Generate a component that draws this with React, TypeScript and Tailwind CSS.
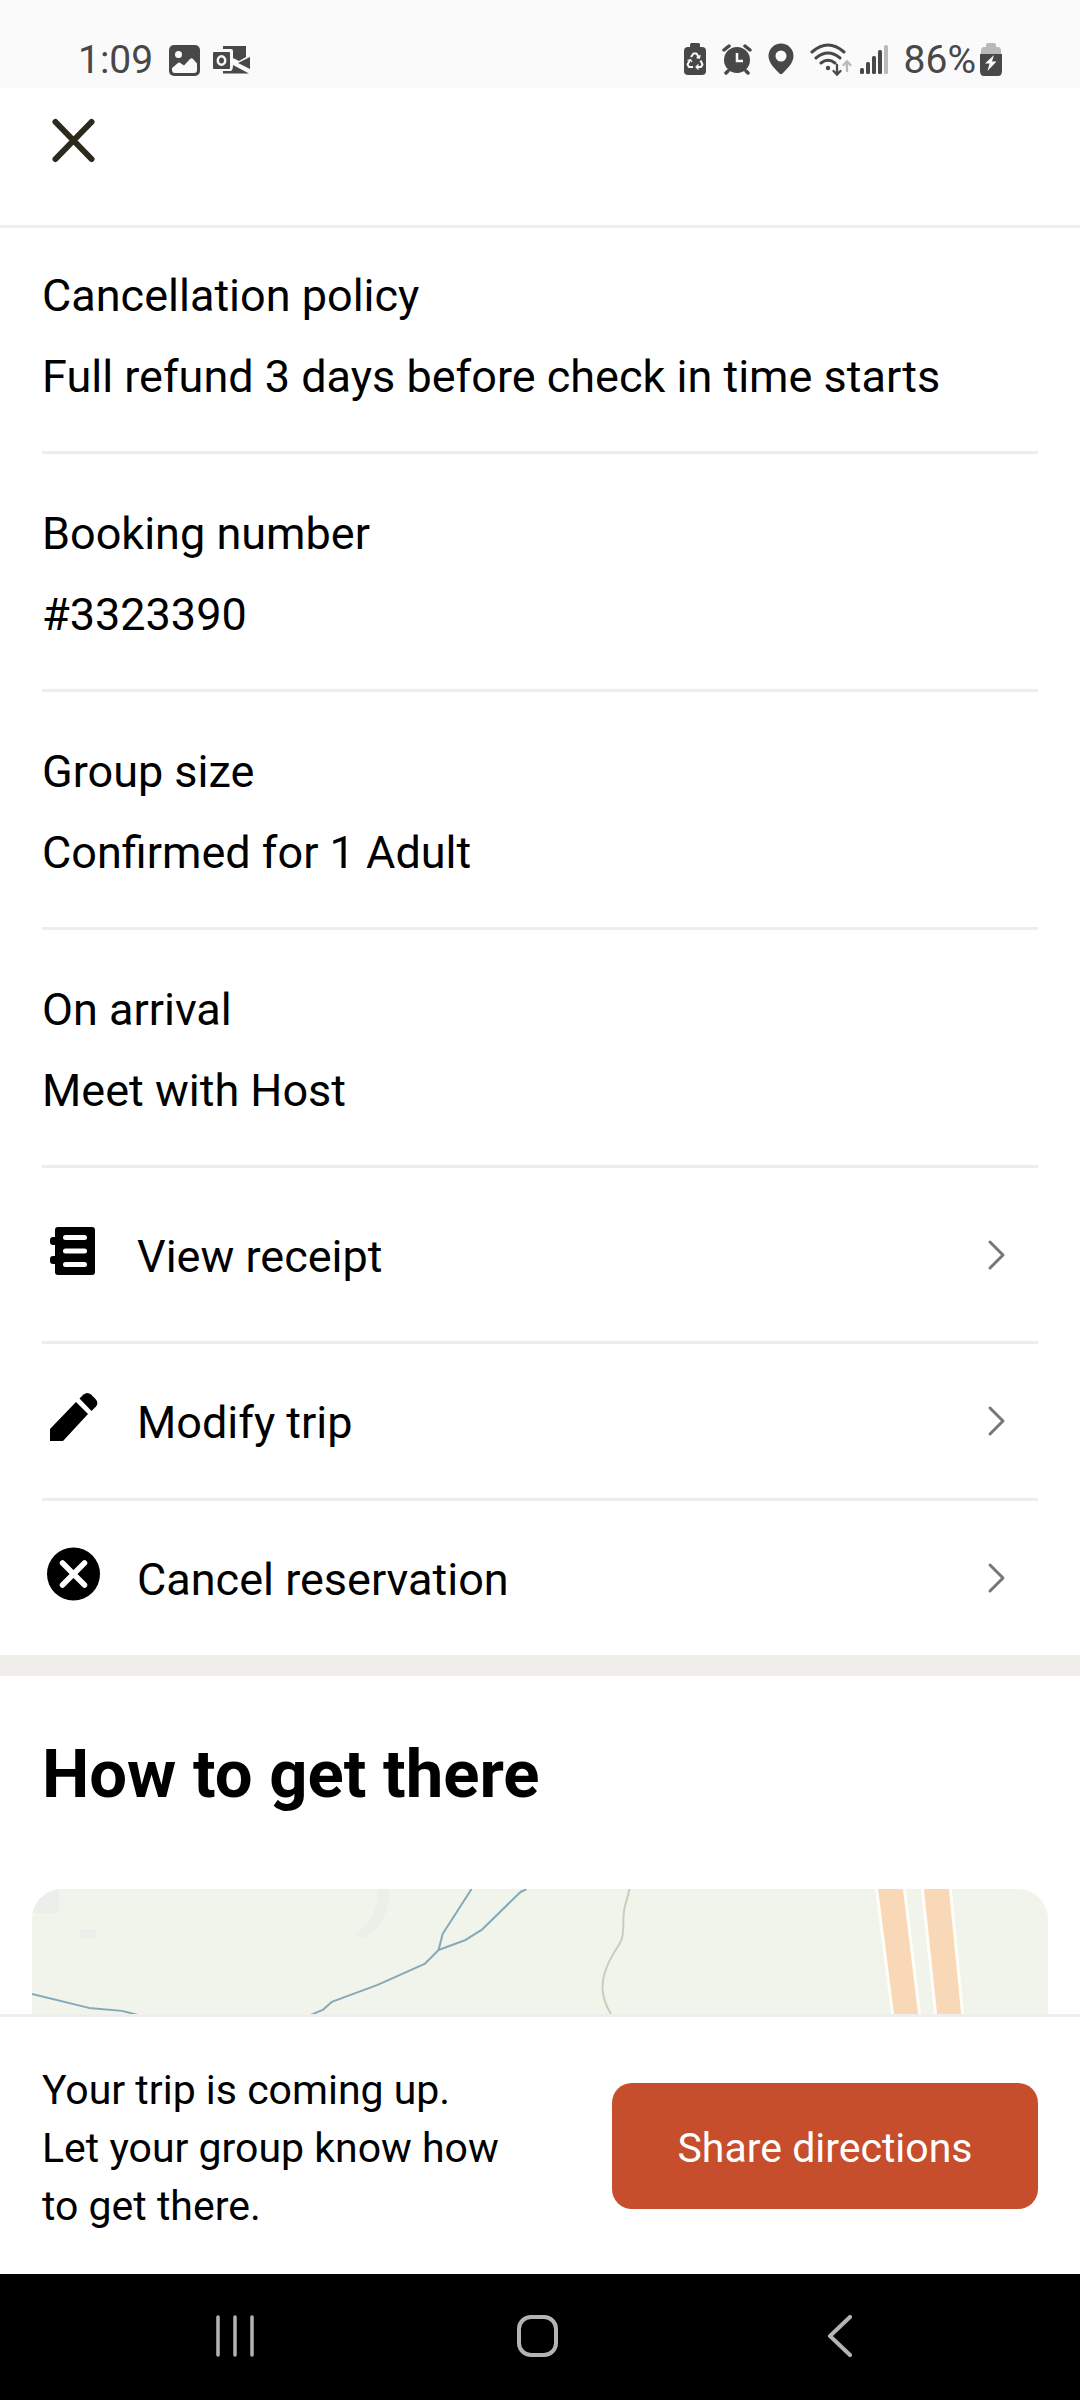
import type { ReactNode } from 'react'

interface Detail {
    label: string;
    value: string;
}

interface ActionRowProps {
    icon: ReactNode;
    label: string;
    className: string;
}

const details: Detail[] = [
    { label: 'Cancellation policy', value: 'Full refund 3 days before check in time starts' },
    { label: 'Booking number', value: '#3323390' },
    { label: 'Group size', value: 'Confirmed for 1 Adult' },
    { label: 'On arrival', value: 'Meet with Host' },
]

const ReceiptIcon = () => (
    <svg width="64" height="56" viewBox="0 0 64 56" aria-hidden="true">
        <rect x="13" y="4" width="40" height="48" rx="3" />
        <rect x="8" y="14" width="10" height="8" rx="3" />
        <rect x="8" y="33" width="10" height="8" rx="3" />
        <path d="M23.5 14.5H42.5M23.5 28H42.5M23.5 41.5H42.5" stroke="#fff" strokeWidth="5" strokeLinecap="round" />
    </svg>
)

const PencilIcon = () => (
    <svg width="64" height="56" viewBox="0 0 64 56" aria-hidden="true">
        <path d="M8 52V40L34 13L46 25L21 52Z" />
        <path d="M37.5 9.5L41.5 5.5Q45.5 2.5 49 5.5L53.5 10Q57 14 54 17.5L49.5 22Z" />
    </svg>
)

const CancelIcon = () => (
    <svg width="64" height="56" viewBox="0 0 64 56" aria-hidden="true">
        <circle cx="31.5" cy="28" r="26.5" />
        <path d="M20.5 17L42.5 39M42.5 17L20.5 39" stroke="#fff" strokeWidth="5.5" strokeLinecap="round" />
    </svg>
)

const ActionRow = ({ icon, label, className }: ActionRowProps) => (
    <button className={`flex w-full items-center border-[#ededed] pr-8 text-left ${className}`}>
        <span className="pb-2 mr-[31px]">{icon}</span>
        <span className="flex-1 pt-1 text-[45px] leading-[54px]">{label}</span>
        <svg width="24" height="32" viewBox="0 0 24 32" fill="none" stroke="#777" strokeWidth="3" strokeLinecap="round" strokeLinejoin="round" aria-hidden="true">
            <path d="M8 3L21 16L8 29" />
        </svg>
    </button>
)

const StatusBar = () => (
    <div className="flex h-[88px] items-start justify-between bg-[#fafafa] px-[78px] pt-[40px] text-[39px] leading-[40px] text-[#484848]">
        <div className="flex gap-3">
            <span className="mr-1">1:09</span>
            {/* Gallery */}
            <svg width="32" height="40" viewBox="0 0 32 40" fill="#484848" aria-hidden="true">
                <rect x="0" y="5" width="31" height="31" rx="5" />
                <circle cx="9.5" cy="14.5" r="3.5" fill="#fafafa" />
                <path d="M3 28L9 23Q10.5 22 12 23.5L15 25.5L21 19Q22.5 17.5 24 19L28 23.5V30Q28 33 25 33H6Q3 33 3 30Z" fill="#fafafa" />
            </svg>
            {/* Outlook */}
            <svg width="38" height="40" viewBox="0 0 38 40" fill="#484848" aria-hidden="true">
                <path d="M10 6H33V17L26 21L20 18V11Q20 9 18 9H10Z" />
                <rect x="0" y="12" width="17" height="17" rx="1" />
                <ellipse cx="8.5" cy="20.5" rx="3.7" ry="4.2" fill="none" stroke="#fafafa" strokeWidth="2.5" />
                <path d="M37 17V29L25 23Z" />
                <path d="M10 31H18Q20 30 20 25L36 33.5H10Z" />
            </svg>
        </div>
        <div className="flex gap-4">
            {/* Battery protection */}
            <svg width="22" height="40" viewBox="0 0 22 40" fill="#484848" aria-hidden="true">
                <rect x="6" y="3" width="10" height="6" rx="1.5" />
                <rect x="0" y="7" width="22" height="28" rx="4" />
                <g fill="none" stroke="#fafafa" strokeWidth="2" strokeLinejoin="round">
                    <path d="M7 17L9.5 13.5H12.5L15 17.5M16.5 20.5L18.5 24.5L17 27H12.5M9 27H5L3.5 24.5L6 20" />
                    <path d="M12.5 17.5L15.5 18L16 15M14.5 24.5L12 27L14.5 29.5M3.5 20.5L6.5 19.5L8 22" strokeWidth="1.3" />
                </g>
            </svg>
            {/* Alarm */}
            <svg width="30" height="40" viewBox="0 0 30 40" fill="#484848" aria-hidden="true">
                <circle cx="15" cy="20" r="13" />
                <path d="M2 10L7 6M28 10L23 6M6 31L4 33M24 31L26 33" stroke="#484848" strokeWidth="3.5" strokeLinecap="round" />
                <path d="M15 13V21H21" fill="none" stroke="#fafafa" strokeWidth="2.5" />
            </svg>
            {/* Location */}
            <svg width="26" height="40" viewBox="0 0 26 40" fill="#484848" aria-hidden="true">
                <path fillRule="evenodd" d="M13 3.5C6 3.5 0.5 9 0.5 16C0.5 23 7 29 11.5 33.5Q13 35 14.5 33.5C19 29 25.5 23 25.5 16C25.5 9 20 3.5 13 3.5ZM13 10.5A5.5 5.5 0 1 1 13 21.5A5.5 5.5 0 1 1 13 10.5Z" />
            </svg>
            <div className="flex gap-2">
                {/* Wi-Fi */}
                <svg width="42" height="40" viewBox="0 0 42 40" fill="none" stroke="#484848" strokeWidth="3" strokeLinecap="round" aria-hidden="true">
                    <path d="M2 12Q18 -2 34 12M6 18Q18 8 30 18M11 23Q18 17.5 25 23" />
                    <circle cx="18" cy="28" r="2.2" fill="#484848" stroke="none" />
                    <path d="M27 25V34M23.5 31L27 34.5L30.5 31" strokeWidth="2.3" />
                    <path d="M37 31V22M33.5 25L37 21.5L40.5 25" stroke="#b9b9b9" strokeWidth="2.3" />
                </svg>
                {/* Signal */}
                <svg width="28" height="40" viewBox="0 0 28 40" aria-hidden="true">
                    <g fill="#484848">
                        <rect x="0" y="28" width="4" height="6" rx="1.5" />
                        <rect x="6" y="22" width="4" height="12" rx="1.5" />
                        <rect x="12" y="16" width="4" height="18" rx="1.5" />
                        <rect x="18" y="10" width="4" height="24" rx="1.5" />
                    </g>
                    <rect x="24" y="5" width="4" height="29" rx="1.5" fill="#b9b9b9" />
                </svg>
            </div>
            <div className="flex gap-1">
                <span>86%</span>
                {/* Charging battery */}
                <svg width="22" height="40" viewBox="0 0 22 40" aria-hidden="true">
                    <path d="M1 14V11Q1 7 4 7H6V5Q6 3 8 3H14Q16 3 16 5V7H18Q21 7 21 11V14Z" fill="#b9b9b9" />
                    <path d="M0 14H22V31Q22 36 18 36H4Q0 36 0 31Z" fill="#484848" />
                    <path d="M14 15L5 23.5H9.5L7.5 31L16.5 21.5H12Z" fill="#fafafa" />
                </svg>
            </div>
        </div>
    </div>
)

const MapPreview = () => (
    <div className="mx-8 min-h-[125px] flex-1 basis-0 overflow-hidden rounded-t-[30px] bg-[#f0f4ea]">
        <svg className="block w-full" viewBox="0 0 1017 125" fill="none" role="img" aria-label="Map">
            <path d="M0 0H27V24H0ZM48 40H64V49H48Z" fill="#eaf0e9" />
            <path d="M346 0H358Q357 22 350 32Q344 42 332 50L322 46Q334 38 341 26Q346 15 346 0Z" fill="#eaf0e9" />
            <g stroke="#84a9b8" strokeWidth="2" strokeLinejoin="round">
                <path d="M440 0L411 45L407 61" />
                <path d="M495 0L489 3L450 41L434 51L407 61L393 75L346 96L300 113L291 121L279 126" />
                <path d="M0 105L57 119L90 122L106 126" />
            </g>
            <path d="M598 0C596 12 592 16 592 30C592 52 590 52 583 63C575 76 571 86 571 98C571 108 574 116 580 126" stroke="#c9cdba" strokeWidth="2" />
            <g fill="#f8d8b6" stroke="#fffdf8" strokeWidth="3">
                <path d="M845 -3H873L889 130H862Z" />
                <path d="M891 -3H919L932 130H905Z" />
            </g>
        </svg>
    </div>
)

const App = () => {
    return (
        <div className="flex min-h-screen flex-col bg-white font-[Roboto,sans-serif] text-black">
            <StatusBar />

            {/* Header */}
            <header className="h-[140px] border-b-[3px] border-[#eeeeee] px-[42px] pt-[20px]">
                <button aria-label="Close" className="block">
                    <svg width="64" height="64" viewBox="0 0 64 64" fill="none" stroke="#2b2a1c" strokeWidth="6" strokeLinecap="round">
                        <path d="M13.5 14L49.5 51M49.5 14L13.5 51" />
                    </svg>
                </button>
            </header>

            {/* Booking details */}
            <main className="flex flex-1 flex-col">
                <dl className="px-[42px] text-[45px] leading-[54px]">
                    {details.map(({ label, value }) => (
                        <div key={label} className="border-b-[3px] border-[#ededed] pt-[53px] pb-[47px] first:pt-[41px]">
                            <dt className="mb-[27px]">{label}</dt>
                            <dd>{value}</dd>
                        </div>
                    ))}
                </dl>

                <div className="px-[42px]">
                    <ActionRow icon={<ReceiptIcon />} label="View receipt" className="h-[176px] border-b-[3px]" />
                    <ActionRow icon={<PencilIcon />} label="Modify trip" className="h-[157px] border-b-[3px]" />
                    <ActionRow icon={<CancelIcon />} label="Cancel reservation" className="h-[154px]" />
                </div>

                <div className="h-[21px] bg-[#efeeea]"></div>

                <h2 className="px-[42px] pt-[58px] pb-[75px] text-[67px] leading-[80px] font-bold">How to get there</h2>
                <MapPreview />
            </main>

            {/* Share bar */}
            <footer className="flex items-center justify-between border-t-[3px] border-[#eeeeee] px-[42px] pt-[40px] pb-[39px]">
                <p className="pt-1 text-[41px] leading-[58px]">
                    Your trip is coming up.<br />
                    Let your group know how<br />
                    to get there.
                </p>
                <button className="h-[126px] w-[426px] rounded-[20px] bg-[#c74e2c] pt-1 text-[41px] leading-[58px] text-white">
                    Share directions
                </button>
            </footer>

            {/* System navigation */}
            <nav className="flex h-[126px] items-center justify-between bg-black pr-[218px] pl-[213px]">
                <button aria-label="Recent apps">
                    <svg width="44" height="44" viewBox="0 0 44 44" stroke="#b4b4b4" strokeWidth="3.5" strokeLinecap="round">
                        <path d="M5 2V40M22 2V40M39 2V40" />
                    </svg>
                </button>
                <button aria-label="Home">
                    <svg width="44" height="44" viewBox="0 0 44 44" fill="none" stroke="#b4b4b4" strokeWidth="4">
                        <rect x="3" y="2" width="37" height="38" rx="12" />
                    </svg>
                </button>
                <button aria-label="Back">
                    <svg width="44" height="44" viewBox="0 0 44 44" fill="none" stroke="#b4b4b4" strokeWidth="4" strokeLinecap="round" strokeLinejoin="round">
                        <path d="M32 2L12 21L32 40" />
                    </svg>
                </button>
            </nav>
        </div>
    )
}

export default App
